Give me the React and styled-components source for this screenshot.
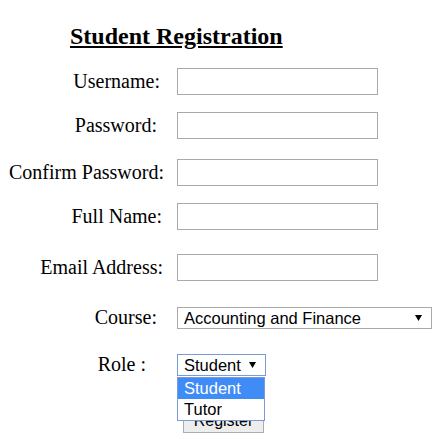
import React from 'react';
import styled, { createGlobalStyle } from 'styled-components';

const GlobalStyle = createGlobalStyle`
  html, body {
    margin: 0;
    padding: 0;
    background: #ffffff;
  }
  body {
    font-family: "Liberation Serif", "Times New Roman", serif;
    color: #000;
  }
`;

const Page = styled.div`
  padding-top: 22px;
`;

const Title = styled.h2`
  margin: 0;
  padding-left: 70px;
  font-size: 24px;
  line-height: 28px;
  font-weight: bold;
  text-decoration: underline;
`;

const Form = styled.form`
  display: flex;
  flex-direction: column;
`;

const Row = styled.div`
  display: grid;
  grid-template-columns: 166px 1fr;
  column-gap: 11px;
  align-items: center;
  margin-top: ${p => p.$top}px;
`;

const Label = styled.label`
  text-align: right;
  padding-right: ${p => p.$inset}px;
  margin-top: -2px;
  font-size: 20px;
  line-height: 22px;
  white-space: nowrap;
`;

const TextInput = styled.input`
  box-sizing: border-box;
  width: 201px;
  height: 27px;
  margin: 0;
  padding: 1px 3px;
  border: 1px solid #a9a9a9;
  font: 16px "Liberation Sans", Arial, sans-serif;
  outline: none;
`;

const SelectBox = styled.div`
  position: relative;
  width: ${p => p.$width}px;
  height: 22px;
`;

const Select = styled.select`
  appearance: none;
  -webkit-appearance: none;
  box-sizing: border-box;
  width: 100%;
  height: 22px;
  margin: 0;
  padding: 0 0 0 6px;
  border: 1px solid ${p => (p.$open ? '#7b9bd6' : '#a9a9a9')};
  border-radius: 0;
  background: #fff;
  color: #000;
  font: 16.5px "Liberation Sans", Arial, sans-serif;
  outline: none;
`;

const Arrow = styled.svg`
  position: absolute;
  right: 10px;
  top: 8px;
  pointer-events: none;
`;

const OptionList = styled.div`
  position: absolute;
  left: 0;
  top: 23px;
  box-sizing: border-box;
  width: 88px;
  border: 1px solid #7b9bd6;
  background: #fff;
  z-index: 2;
`;

const OptionItem = styled.div`
  height: 21px;
  padding-left: 6px;
  font: 16.5px/21px "Liberation Sans", Arial, sans-serif;
  background: ${p => (p.$active ? '#3f8cf6' : '#fff')};
  color: ${p => (p.$active ? '#fff' : '#000')};
`;

const Button = styled.button`
  box-sizing: border-box;
  margin-left: 6px;
  width: 81px;
  height: 24px;
  padding: 0;
  border: 1px solid #adadad;
  background: #ededed;
  color: #000;
  font: 16px "Liberation Sans", Arial, sans-serif;
`;

const fields = [
  { label: 'Username:', type: 'text', inset: 6, top: 18 },
  { label: 'Password:', type: 'password', inset: 9, top: 17 },
  { label: 'Confirm Password:', type: 'password', inset: 2, top: 20 },
  { label: 'Full Name:', type: 'text', inset: 4, top: 17 },
  { label: 'Email Address:', type: 'email', inset: 3, top: 24 },
];

const DownArrow = () => (
  <Arrow width="7" height="6" viewBox="0 0 7 6">
    <path d="M0 0 H7 L3.5 6 Z" fill="#000" />
  </Arrow>
);

const App = () => (
  <Page>
    <GlobalStyle />
    <Title>Student Registration</Title>
    <Form onSubmit={e => e.preventDefault()}>
      {fields.map((f, i) => (
        <Row key={i} $top={f.top}>
          <Label $inset={f.inset}>{f.label}</Label>
          <div>
            <TextInput type={f.type} />
          </div>
        </Row>
      ))}
      <Row $top={26}>
        <Label $inset={9}>Course:</Label>
        <SelectBox $width={255}>
          <Select defaultValue="af">
            <option value="af">Accounting and Finance</option>
          </Select>
          <DownArrow />
        </SelectBox>
      </Row>
      <Row $top={25}>
        <Label $inset={20}>Role :</Label>
        <SelectBox $width={89}>
          <Select $open defaultValue="student">
            <option value="student">Student</option>
            <option value="tutor">Tutor</option>
          </Select>
          <DownArrow />
          <OptionList>
            <OptionItem $active>Student</OptionItem>
            <OptionItem>Tutor</OptionItem>
          </OptionList>
        </SelectBox>
      </Row>
      <Row $top={33}>
        <span />
        <div>
          <Button type="submit">Register</Button>
        </div>
      </Row>
    </Form>
  </Page>
);

export default App;
